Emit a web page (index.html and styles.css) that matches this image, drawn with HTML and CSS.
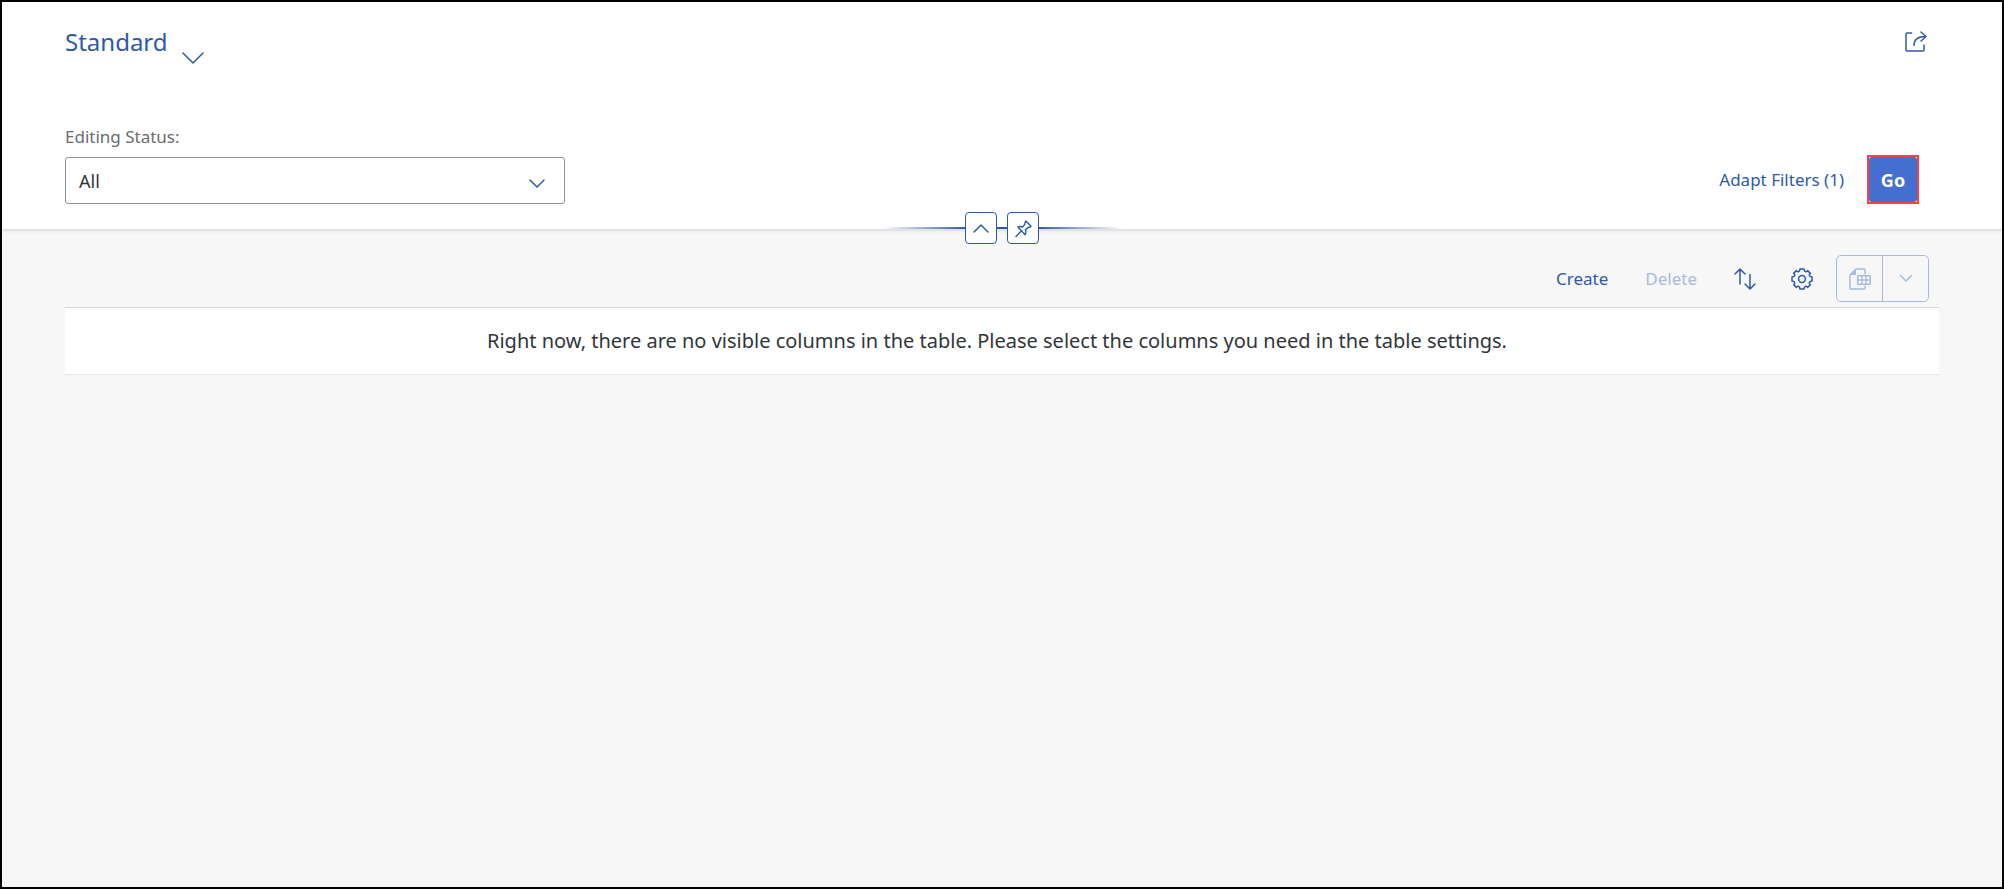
FILE: index.html
```html
<!DOCTYPE html>
<html lang="en">
<head>
<meta charset="utf-8">
<title>Standard</title>
<link rel="stylesheet" href="styles.css">
</head>
<body>
<div class="page">
  <header class="header">
    <div class="title-row">
      <button class="variant" type="button">
        <span>Standard</span>
        <svg class="variant-arrow" width="22" height="12" viewBox="0 0 22 12"><path d="M1 1l10 10L21 1"/></svg>
      </button>
      <button class="icon-button share" type="button" aria-label="Share">
        <svg width="22" height="22" viewBox="0 0 22 22"><path d="M6.500 2H2Q1 2 1 3V19Q1 20 2 20H18Q19 20 19 19V14M9 14.500C9 8.500 13 5.500 20.500 5.500M16 1l5 4.500L16 10"/></svg>
      </button>
    </div>
    <div class="filter-row">
      <div class="field">
        <label for="status">Editing Status:</label>
        <div class="select-box">
          <select id="status"><option>All</option></select>
          <svg class="select-arrow" width="16" height="9" viewBox="0 0 16 9"><path d="M1 1l7 7 7-7"/></svg>
        </div>
      </div>
      <div class="filter-actions">
        <button class="text-button" type="button">Adapt Filters (1)</button>
        <div class="highlight"><button class="go" type="button">Go</button></div>
      </div>
    </div>
    <div class="header-tools">
      <button class="tool" type="button" aria-label="Collapse header">
        <svg width="16" height="9" viewBox="0 0 16 9"><path d="M1 8l7-7 7 7"/></svg>
      </button>
      <button class="tool" type="button" aria-label="Pin header">
        <svg width="17" height="17" viewBox="0 0 18 18"><path d="M11.500 1L17 6.500Q15.500 8 13.500 8L11 10.500Q12 13 10.800 15.500L3 7.500Q5.500 6.300 8 7.500L10.500 4.500Q10.300 2.500 11.500 1zM7 11.500L1 17.500"/></svg>
      </button>
    </div>
  </header>
  <main class="content">
    <div class="toolbar">
      <button class="text-button" type="button">Create</button>
      <button class="text-button" type="button" disabled>Delete</button>
      <button class="icon-button" type="button" aria-label="Sort">
        <svg width="22" height="22" viewBox="0 0 22 22"><path d="M6 16V1M1 6l5-5 5 5M16 6.500V21M11 16l5 5 5-5"/></svg>
      </button>
      <button class="icon-button" type="button" aria-label="Settings">
        <svg width="22" height="22" viewBox="0 0 22 22"><g transform="translate(11 11)"><path d="M-2-10H2L2.600-8Q4.200-6.400 5.600-8.400L8.400-5.600Q6.400-4.200 8-2.600L10-2V2L8 2.600Q6.400 4.200 8.400 5.600L5.600 8.400Q4.200 6.400 2.600 8L2 10H-2L-2.600 8Q-4.200 6.400-5.600 8.400L-8.400 5.600Q-6.400 4.200-8 2.600L-10 2V-2L-8-2.600Q-6.400-4.200-8.400-5.600L-5.600-8.400Q-4.200-6.400-2.600-8z"/><circle r="3.400"/></g></svg>
      </button>
      <div class="split">
        <button type="button" disabled aria-label="Export">
          <svg width="22" height="22" viewBox="0 0 22 22"><path d="M16 5.500V2Q16 1 15 1H7L1 7V20Q1 21 2 21H15Q16 21 16 20V18.500"/><path class="solid" d="M1 7L7 1V7zM8 7H21Q22 7 22 8V16Q22 17 21 17H9Q8 17 8 16z"/><path class="cells" d="M9.500 8.500h2.800v2.700H9.500zM13.600 8.500h2.800v2.700h-2.800zM17.700 8.500h2.800v2.700h-2.800zM9.500 12.800h2.800v2.700H9.500zM13.600 12.800h2.800v2.700h-2.800zM17.700 12.800h2.800v2.700h-2.800z"/></svg>
        </button>
        <button type="button" disabled aria-label="Export options">
          <svg width="12" height="7" viewBox="0 0 12 7"><path d="M0.500 0.500L6 6l5.500-5.500"/></svg>
        </button>
      </div>
    </div>
    <table class="table">
      <tbody><tr><td>Right now, there are no visible columns in the table. Please select the columns you need in the table settings.</td></tr></tbody>
    </table>
  </main>
</div>
</body>
</html>
```
FILE: styles.css
```css
* { box-sizing: border-box; }

body {
  margin: 0;
  font-family: "Noto Sans", sans-serif;
  font-size: 18px;
  line-height: 24px;
  color: #32363a;
}

button, select { font: inherit; color: inherit; }

button {
  display: flex;
  align-items: center;
  justify-content: center;
  padding: 0;
  border: 0;
  background: none;
  color: #2f59aa;
}

svg {
  display: block;
  overflow: visible;
  fill: none;
  stroke: currentColor;
  stroke-width: 1.5;
  stroke-linecap: round;
  stroke-linejoin: round;
}

.page {
  min-height: 100vh;
  border: 2px solid #000;
  background: #f7f7f7;
}

.header {
  position: relative;
  padding: 19px 63px 25px;
  background: #fff;
  box-shadow: 0 0 4px 1px #d0d0d0;
  clip-path: inset(0 0 -20px 0);
}

.title-row {
  display: flex;
  justify-content: space-between;
  align-items: flex-start;
  height: 104px;
}

.variant {
  gap: 14px;
  height: 42px;
  font-size: 24px;
  line-height: 36px;
}

.variant-arrow { margin-top: 32px; }

.share { margin: 10px 12px 0 0; }

.filter-row {
  display: flex;
  justify-content: space-between;
  align-items: flex-end;
}

.field { width: 500px; }

.field label {
  display: block;
  margin-bottom: 8px;
  font-size: 17px;
  color: #6a6d70;
}

.select-box { position: relative; }

.select-box select {
  display: block;
  width: 100%;
  height: 47px;
  padding: 0 13px;
  appearance: none;
  border: 1px solid #89919a;
  border-radius: 3px;
  background: #fff;
}

.select-arrow {
  position: absolute;
  top: 22px;
  right: 20px;
  color: #2f59aa;
  pointer-events: none;
}

.filter-actions {
  display: flex;
  align-items: center;
  gap: 23px;
  margin-right: 20px;
}

.text-button { font-size: 17px; }

.highlight { border: 2px solid #f9403c; background: #e4eaf7; }

.go {
  width: 48px;
  height: 45px;
  border-radius: 3px;
  background: #446fd1;
  color: #fff;
  font-weight: 700;
}

.header-tools {
  position: absolute;
  left: 50%;
  bottom: -15px;
  display: flex;
  justify-content: center;
  gap: 10px;
  width: 240px;
  margin-left: -120px;
  background: linear-gradient(90deg, transparent, #2f59aa 35%, #2f59aa 65%, transparent) center / 100% 2px no-repeat;
}

.tool {
  width: 32px;
  height: 32px;
  border: 1px solid #2f59aa;
  border-radius: 4px;
  background: #fff;
}

.content { padding: 26px 63px; }

.toolbar {
  display: flex;
  align-items: center;
  justify-content: flex-end;
  padding: 0 10px 5px 0;
}

.toolbar .text-button { margin-right: 37px; }
.toolbar .icon-button { margin-right: 35px; }
.toolbar .icon-button + .icon-button { margin-right: 23px; }

button:disabled { color: #a6bbdd; }

.split {
  display: flex;
  height: 47px;
  border: 1px solid #a6bbdd;
  border-radius: 5px;
}

.split button { width: 45px; }
.split button + button { width: 46px; border-left: 1px solid #a6bbdd; }

.solid { fill: currentColor; stroke: none; }
.cells { fill: #f7f7f7; stroke: none; }

.table {
  width: 100%;
  border-collapse: collapse;
  background: #fff;
}

.table td {
  height: 67px;
  padding: 0 10px 0 0;
  border-top: 1px solid #d9d9d9;
  border-bottom: 1px solid #e5e5e5;
  font-size: 20px;
  text-align: center;
}
```
